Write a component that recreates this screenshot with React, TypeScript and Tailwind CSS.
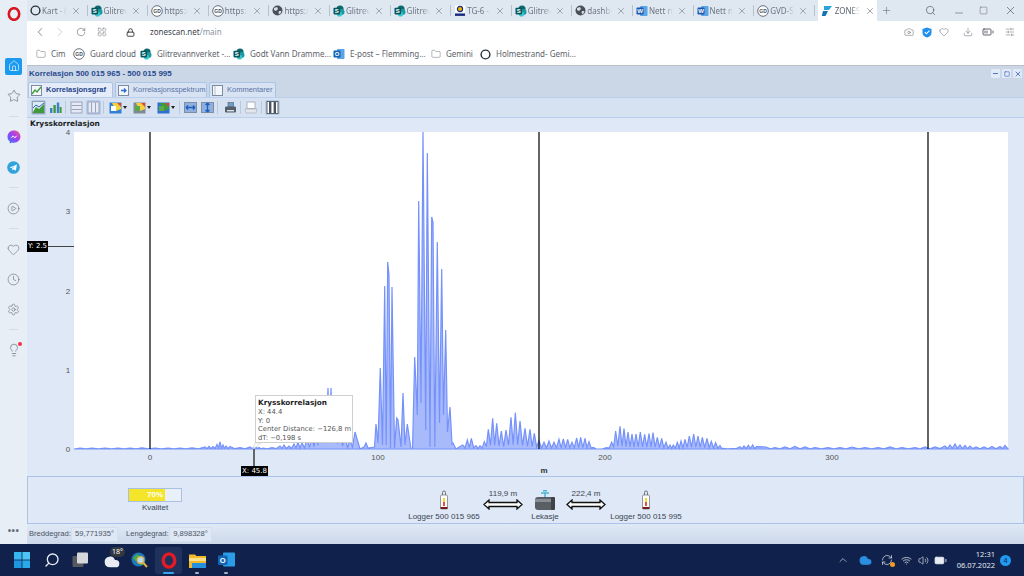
import { FC, ReactNode } from "react";
import {
  Battery,
  BatteryMedium,
  Camera,
  ChevronLeft,
  ChevronRight,
  ChevronUp,
  CirclePlay,
  Clock,
  Cloud,
  Download,
  Folder,
  Heart,
  House,
  LayoutGrid,
  Lightbulb,
  Lock,
  Minus,
  Plus,
  RefreshCw,
  RotateCw,
  Search,
  Settings,
  SlidersHorizontal,
  Square,
  Star,
  Volume2,
  Wifi,
  X,
} from "lucide-react";

const BASE = 449;

// main burst, read off the picture point by point
const burst: number[][] = [
  [360, 449], [364, 447], [366, 443], [368, 448], [374.5, 447], [376, 424], [378, 443], [380.3, 368],
  [382.5, 445], [384.7, 286], [386.2, 445], [387.7, 262], [389, 275], [390.5, 448], [392, 287], [394.5, 448],
  [396.7, 418], [398, 420], [401, 447], [403, 393], [405, 445], [407.3, 424], [411, 449], [412.5, 449],
  [414.7, 357], [417.3, 415], [418.7, 201], [421, 403], [423, 132], [425.7, 430], [427.3, 153], [430, 447],
  [431.7, 217], [433, 222], [434.8, 447], [437.3, 242], [439.5, 423], [441.7, 269], [443.5, 415], [445.7, 330],
  [447.5, 432], [450, 407], [452, 444], [453, 443], [456, 449],
];

const leftPeaks: number[][] = [
  [80, 448], [92, 448], [105, 448], [118, 448], [130, 448], [142, 447.8], [155, 448], [168, 448], [180, 448],
  [192, 447.8], [205, 447], [209, 446.5], [213, 446.5], [217, 444.5], [220, 442], [223, 445], [226, 446],
  [230, 446.5], [240, 447.5], [250, 447], [255, 446], [259, 447.5], [263, 448], [272, 447.5], [280, 446],
  [284, 445], [289, 446], [294, 444], [298, 442], [302, 443], [307, 439], [312, 436], [316, 432], [320, 418],
  [324, 400], [328, 388], [331, 388], [335, 405], [340, 425], [345, 436], [350, 440], [355, 432],
];

const rightPeaks: number[][] = [
  [8, 195], [22, 180], [34, 175], [48, 197], [60, 197], [73, 185], [85, 148], [98, 115], [110, 130], [124, 153],
  [138, 150], [153, 112], [166, 98], [180, 123], [195, 145], [210, 148], [223, 160], [237, 182], [252, 187],
  [267, 183], [282, 187], [297, 178], [310, 177], [323, 178], [336, 187], [350, 174], [362, 172], [375, 175],
  [387, 185], [400, 202], [415, 207], [440, 203], [455, 187], [467, 153], [480, 139], [492, 146], [504, 156],
  [516, 162], [528, 162], [541, 156], [554, 163], [567, 161], [579, 158], [592, 172], [605, 175], [618, 187],
  [630, 195], [640, 195], [652, 187], [663, 183], [675, 178], [688, 168], [701, 162], [714, 168], [727, 172],
  [741, 175], [754, 184], [767, 188], [780, 197], [790, 205], [815, 206], [840, 200], [852, 198], [865, 196],
  [878, 195], [890, 200],
].map(([x, y]) => [460 + x / 3, 380 + y / 3]);

const farPeaks: number[][] = [
  [766, 447], [775, 447.5], [785, 447], [795, 446.5], [805, 447], [815, 447.5], [828, 447.5], [840, 447.5],
  [852, 447], [865, 447.5], [878, 447.5], [890, 447], [902, 447.5], [915, 447.5], [925, 447], [935, 447],
  [945, 446], [950, 445], [955, 444], [960, 445], [965, 445.5], [970, 446], [976, 447], [984, 447], [992, 446.5],
  [1000, 446.5], [1005, 445.5],
];

const withValleys = (peaks: number[][]) => {
  const out: number[][] = [];
  peaks.forEach((p, i) => {
    out.push(p);
    const next = peaks[i + 1];
    if (next) {
      const top = Math.min(p[1], next[1]);
      out.push([(p[0] + next[0]) / 2, BASE - (BASE - top) * 0.12]);
    }
  });
  return out;
};

const series = [
  [74, 449],
  ...withValleys(leftPeaks),
  ...burst,
  ...withValleys(rightPeaks),
  ...withValleys(farPeaks),
  [1008, 449],
];
const line = series.map((p) => p.join(",")).join(" ");

const CrossChart: FC = () => (
  <svg viewBox="27 129 997 347" className="block h-[347px] w-[997px]">
    <rect x="74" y="132" width="934" height="317" fill="#ffffff" />
    <polygon points={line} fill="#a9bafb" stroke="#7592fb" strokeWidth="1.2" />
    {[150, 539, 928].map((x) => (
      <line key={x} x1={x} x2={x} y1="132" y2="449" stroke="#111111" strokeWidth="1.3" />
    ))}
    <line x1="48" x2="74" y1="246.5" y2="246.5" stroke="#444444" />
    <line x1="254" x2="254" y1="449" y2="467" stroke="#111111" strokeWidth="1.2" />
    <g fontSize="8" fill="#555555" fontFamily="'Liberation Sans', sans-serif">
      {[
        ["4", 135],
        ["3", 214],
        ["2", 294],
        ["1", 373],
        ["0", 452],
      ].map(([t, y]) => (
        <text key={t} x="68" y={y} textAnchor="middle">
          {t}
        </text>
      ))}
      {[
        ["0", 150],
        ["100", 378],
        ["200", 605],
        ["300", 832],
      ].map(([t, x]) => (
        <text key={t} x={x} y="460" textAnchor="middle">
          {t}
        </text>
      ))}
    </g>
    <text x="544" y="473" fontSize="8" fontWeight="700" fill="#333333" textAnchor="middle" fontFamily="'Liberation Sans', sans-serif">
      m
    </text>
    <path d="M255 443 L253 449 L261 443 Z" fill="#ffffff" stroke="#cccccc" strokeWidth="0.6" />
  </svg>
);

/* ---------- small browser glyphs ---------- */
const SharePoint: FC<{ size?: number }> = ({ size = 12 }) => (
  <svg width={size} height={size} viewBox="0 0 12 12" className="shrink-0">
    <circle cx="7" cy="4" r="3.6" fill="#0b6a6f" />
    <circle cx="8.5" cy="7" r="3" fill="#1a9ba1" />
    <circle cx="6.5" cy="9" r="2.6" fill="#37c6d0" />
    <rect x="0.5" y="2.8" width="6.6" height="6.6" rx="0.8" fill="#04575c" />
    <text x="3.8" y="8.2" fontSize="6" fontWeight="700" fill="#ffffff" textAnchor="middle" fontFamily="'Liberation Sans', sans-serif">
      S
    </text>
  </svg>
);

const Ring: FC = () => (
  <svg width="11" height="11" viewBox="0 0 11 11" className="shrink-0">
    <circle cx="5.5" cy="5.5" r="4.4" fill="none" stroke="#26323c" strokeWidth="1.4" />
  </svg>
);

const GuardCloud: FC = () => (
  <svg width="12" height="12" viewBox="0 0 12 12" className="shrink-0">
    <circle cx="6" cy="6" r="5.3" fill="#ffffff" stroke="#44505e" strokeWidth="0.8" />
    <text x="6" y="7.8" fontSize="5" fontWeight="700" fill="#44505e" textAnchor="middle" fontFamily="'Liberation Sans', sans-serif">
      GD
    </text>
  </svg>
);

const Globe: FC = () => (
  <svg width="11" height="11" viewBox="0 0 11 11" className="shrink-0">
    <circle cx="5.5" cy="5.5" r="5" fill="#4a5058" />
    <path d="M2 3 L5 2 L6 4 L4 6 L2 5 Z M7 6 L9.5 6 L8 9.5 L6.5 8 Z" fill="#d6dde6" />
  </svg>
);

const OfficeApp: FC<{ letter: string; color: string }> = ({ letter, color }) => (
  <svg width="12" height="12" viewBox="0 0 12 12" className="shrink-0">
    <rect x="4" y="1" width="7.5" height="10" rx="0.8" fill="#5aa5e6" />
    <rect x="0.5" y="2.6" width="7" height="7" rx="0.8" fill={color} />
    <text x="4" y="8" fontSize="6" fontWeight="700" fill="#ffffff" textAnchor="middle" fontFamily="'Liberation Sans', sans-serif">
      {letter}
    </text>
  </svg>
);

const Tg6: FC = () => (
  <svg width="12" height="12" viewBox="0 0 12 12" className="shrink-0">
    <rect x="1" y="0.5" width="10" height="7" fill="#ffffff" />
    <circle cx="6" cy="4" r="2.6" fill="#f0b400" stroke="#1a2c80" strokeWidth="1.2" />
    <rect x="1" y="8.5" width="10" height="2.4" fill="#1a2c80" />
  </svg>
);

const ZoneLogo: FC = () => (
  <svg width="12" height="12" viewBox="0 0 12 12" className="shrink-0">
    <path d="M3 1 L11 1 L8 5 L3 5 Z" fill="#29a3e0" />
    <path d="M2 6 L7 6 L4.5 11 L0.8 11 Z" fill="#1373b8" />
  </svg>
);

const tabs: { icon: ReactNode; label: string }[] = [
  { icon: <Ring />, label: "Kart - (" },
  { icon: <SharePoint />, label: "Glitrev" },
  { icon: <GuardCloud />, label: "https:/" },
  { icon: <GuardCloud />, label: "https:/" },
  { icon: <Globe />, label: "https:/" },
  { icon: <SharePoint />, label: "Glitrev" },
  { icon: <SharePoint />, label: "Glitrev" },
  { icon: <Tg6 />, label: "TG-6 -" },
  { icon: <SharePoint />, label: "Glitrev" },
  { icon: <Globe />, label: "dashbo" },
  { icon: <OfficeApp letter="W" color="#1d56b0" />, label: "Nett ny" },
  { icon: <OfficeApp letter="W" color="#1d56b0" />, label: "Nett ny" },
  { icon: <GuardCloud />, label: "GVD-Sy" },
];

const TabBar: FC = () => (
  <div className="flex h-[21px] items-center bg-[#dfe7f1]">
    {tabs.map((t, i) => (
      <div key={i} className="flex h-full w-[60.6px] shrink-0 items-center gap-[1px] pl-[3px]">
        {t.icon}
        <span className="w-[27px] overflow-hidden whitespace-nowrap text-[8px] text-[#6d7683] [mask-image:linear-gradient(90deg,#000_65%,transparent)]">
          {t.label}
        </span>
        <X size={10} strokeWidth={1.2} className="ml-[3px] shrink-0 text-[#5d6670]" />
        <span className="ml-[5px] h-[11px] w-px shrink-0 bg-[#b7c0cb]" />
      </div>
    ))}
    <div className="ml-[3px] flex h-full w-[59px] shrink-0 items-center gap-[2px] bg-white pl-[3px]">
      <ZoneLogo />
      <span className="w-[25px] overflow-hidden whitespace-nowrap text-[8px] text-[#59626d] [mask-image:linear-gradient(90deg,#000_65%,transparent)]">
        ZONES
      </span>
      <X size={10} strokeWidth={1.2} className="ml-[3px] shrink-0 text-[#444c55]" />
    </div>
    <Plus size={11} strokeWidth={1.2} className="ml-[4px] shrink-0 text-[#5d6670]" />
    <div className="ml-auto flex items-center">
      <Search size={11} strokeWidth={1.4} className="mr-[17px] text-[#4a525c]" />
      <Minus size={12} strokeWidth={1.1} className="mr-[14px] mt-[4px] text-[#4a525c]" />
      <Square size={9} strokeWidth={1.1} className="mr-[16px] text-[#4a525c]" />
      <X size={13} strokeWidth={1.1} className="mr-[7px] text-[#3c444d]" />
    </div>
  </div>
);

const AddressBar: FC = () => (
  <div className="flex h-[22px] items-center bg-white text-[#3d444c]">
    <ChevronLeft size={14} strokeWidth={1.2} className="ml-[6px] text-[#555c65]" />
    <ChevronRight size={14} strokeWidth={1.2} className="ml-[6px] text-[#b4bac2]" />
    <RotateCw size={10} strokeWidth={1.3} className="ml-[9px] text-[#555c65]" />
    <LayoutGrid size={10} strokeWidth={1.1} className="ml-[11px] text-[#6a717a]" />
    <Lock size={9} strokeWidth={2.4} className="ml-[19px] text-[#2f353c]" />
    <span className="ml-[15px] text-[8px]">
      zonescan.net<span className="text-[#8b929b]">/main</span>
    </span>
    <div className="ml-auto flex items-center text-[#5b636c]">
      <Camera size={10} strokeWidth={1.2} />
      <svg width="10" height="11" viewBox="0 0 10 11" className="ml-[8px]">
        <path d="M5 0.5 L9.5 2 V6 C9.5 8.5 7 10 5 10.5 C3 10 0.5 8.5 0.5 6 V2 Z" fill="#1e90f0" />
        <path d="M2.8 5.2 L4.4 6.8 L7.4 3.6" fill="none" stroke="#ffffff" strokeWidth="1.1" />
      </svg>
      <Heart size={10} strokeWidth={1.2} className="ml-[7px]" />
      <Download size={10} strokeWidth={1.2} className="ml-[14px]" />
      <BatteryMedium size={12} strokeWidth={1.6} className="ml-[9px] text-[#3a4048]" />
      <SlidersHorizontal size={10} strokeWidth={1.2} className="ml-[11px] mr-[9px]" />
    </div>
  </div>
);

const bookmarks: { icon: ReactNode; label: string; width: string }[] = [
  { icon: <Folder size={10} strokeWidth={1.1} className="text-[#5b636c]" />, label: "Cim", width: "w-[37px]" },
  { icon: <GuardCloud />, label: "Guard cloud", width: "w-[67px]" },
  { icon: <SharePoint />, label: "Glitrevannverket -...", width: "w-[93px]" },
  { icon: <SharePoint />, label: "Godt Vann Dramme...", width: "w-[100px]" },
  { icon: <OfficeApp letter="O" color="#0f64b4" />, label: "E-post – Flemming...", width: "w-[98px]" },
  { icon: <Folder size={10} strokeWidth={1.1} className="text-[#5b636c]" />, label: "Gemini", width: "w-[49px]" },
  { icon: <Ring />, label: "Holmestrand- Gemi...", width: "w-[90px]" },
];

const BookmarkBar: FC = () => (
  <div className="flex h-[23px] items-center border-b border-[#b9c0c8] bg-white pl-[9px] text-[8px] text-[#5c636b]">
    {bookmarks.map((b) => (
      <div key={b.label} className={`flex shrink-0 items-center gap-[5px] whitespace-nowrap ${b.width}`}>
        {b.icon}
        <span>{b.label}</span>
      </div>
    ))}
  </div>
);

const SideRow: FC<{ children: ReactNode }> = ({ children }) => (
  <div className="flex h-[30px] items-center justify-center text-[#69737e]">{children}</div>
);
const SideSep: FC = () => (
  <div className="flex h-[11px] items-center justify-center">
    <div className="h-px w-[9px] bg-[#d4dbe3]" />
  </div>
);

const Sidebar: FC = () => (
  <aside className="flex w-[27px] shrink-0 flex-col bg-[#e7eef6]">
    <div className="flex h-[51px] shrink-0 justify-center pt-[7px]">
      <svg width="14" height="14" viewBox="0 0 14 14">
        <ellipse cx="7" cy="7" rx="5.2" ry="5.8" fill="none" stroke="#d8161f" strokeWidth="2.6" />
      </svg>
    </div>
    <SideRow>
      <div className="flex h-[17px] w-[17px] items-center justify-center rounded-[2px] bg-[#1a9bf0]">
        <House size={12} strokeWidth={1.3} className="text-white" />
      </div>
    </SideRow>
    <SideRow>
      <Star size={14} strokeWidth={1.2} />
    </SideRow>
    <SideSep />
    <SideRow>
      <svg width="14" height="14" viewBox="0 0 14 14">
        <defs>
          <linearGradient id="msg" x1="0" y1="1" x2="1" y2="0">
            <stop offset="0" stopColor="#2f7bf6" />
            <stop offset="0.55" stopColor="#a33df0" />
            <stop offset="1" stopColor="#f5617a" />
          </linearGradient>
        </defs>
        <path d="M7 0.5 C3.2 0.5 0.5 3.2 0.5 6.7 C0.5 8.7 1.4 10.3 2.8 11.4 V13.5 L4.9 12.4 C5.6 12.6 6.3 12.7 7 12.7 C10.8 12.7 13.5 10 13.5 6.6 C13.5 3.2 10.8 0.5 7 0.5 Z" fill="url(#msg)" />
        <path d="M3.2 8.4 L5.9 5.4 L7.6 6.9 L10.6 5.2 L8 8.2 L6.2 6.8 Z" fill="#ffffff" />
      </svg>
    </SideRow>
    <SideRow>
      <svg width="13" height="13" viewBox="0 0 13 13">
        <circle cx="6.5" cy="6.5" r="6.3" fill="#2ea3dc" />
        <path d="M2.6 6.4 L10 3.4 L8.8 9.8 L6.6 8.2 L5.4 9.4 L5.2 7.6 L8.4 4.8 L4.4 7.2 Z" fill="#ffffff" />
      </svg>
    </SideRow>
    <SideSep />
    <SideRow>
      <CirclePlay size={13} strokeWidth={1.2} />
    </SideRow>
    <SideSep />
    <SideRow>
      <Heart size={13} strokeWidth={1.2} />
    </SideRow>
    <SideRow>
      <Clock size={13} strokeWidth={1.2} />
    </SideRow>
    <SideRow>
      <Settings size={13} strokeWidth={1.2} />
    </SideRow>
    <SideSep />
    <SideRow>
      <div className="relative">
        <Lightbulb size={14} strokeWidth={1.2} />
        <span className="absolute right-[-1px] top-[-1px] h-[4px] w-[4px] rounded-full bg-[#ef3340]" />
      </div>
    </SideRow>
    <div className="mt-auto pb-[9px] text-center text-[9px] font-bold leading-[9px] tracking-[0.5px] text-[#5e6873]">•••</div>
  </aside>
);

/* ---------- application toolbar ---------- */
const ChartGlyph: FC<{ kind: string }> = ({ kind }) => {
  if (kind === "area") {
    return (
      <svg width="13" height="13" viewBox="0 0 13 13">
        <rect x="0.5" y="0.5" width="12" height="12" fill="#dfe9f6" stroke="#8fa2ba" />
        <path d="M1 11 L4 6 L7 8 L12 3 V12 H1 Z" fill="#3f9b3a" />
        <path d="M1 7 L4 4 L7 6 L12 2" fill="none" stroke="#2c62c0" />
      </svg>
    );
  }
  if (kind === "bars") {
    return (
      <svg width="13" height="13" viewBox="0 0 13 13">
        <rect x="1" y="7" width="2.4" height="5" fill="#3d7fc9" />
        <rect x="4.4" y="4" width="2.4" height="8" fill="#3f9b3a" />
        <rect x="7.8" y="1.5" width="2.4" height="10.5" fill="#3d7fc9" />
        <rect x="10.6" y="6" width="2" height="6" fill="#3f9b3a" />
      </svg>
    );
  }
  if (kind === "rows" || kind === "cols") {
    const vertical = kind === "cols";
    return (
      <svg width="13" height="13" viewBox="0 0 13 13">
        <rect x="1" y="1" width="11" height="11" fill="#e6eaf5" stroke="#9aa4bb" />
        {vertical ? (
          <path d="M4.5 1.5 V11.5 M8.5 1.5 V11.5" stroke="#9aa4bb" />
        ) : (
          <path d="M1.5 4.5 H11.5 M1.5 8.5 H11.5" stroke="#9aa4bb" />
        )}
      </svg>
    );
  }
  if (kind === "colorA" || kind === "colorB" || kind === "colorC") {
    const main = kind === "colorA" ? "#2f7fd6" : kind === "colorB" ? "#7f8a99" : "#2f6fd0";
    return (
      <svg width="13" height="13" viewBox="0 0 13 13">
        <rect x="0.5" y="1.5" width="12" height="11" fill={main} />
        <path d="M3 2 H12 V8 L7 10 Z" fill={kind === "colorC" ? "#3f9b3a" : "#f3d23c"} />
        <path d="M8 2 H12 V6 Z" fill="#e2452f" />
        <rect x="2" y="5" width="5" height="5" fill={kind === "colorA" ? "#ffffff" : "#5aa84a"} />
      </svg>
    );
  }
  if (kind === "fitH" || kind === "fitV") {
    return (
      <svg width="13" height="13" viewBox="0 0 13 13">
        <rect x="0.5" y="1.5" width="12" height="10" fill="#8fb0de" stroke="#7b8ea3" />
        <path
          d={kind === "fitH" ? "M2 6.5 H11 M2 6.5 L4 4.5 M2 6.5 L4 8.5 M11 6.5 L9 4.5 M11 6.5 L9 8.5" : "M6.5 2 V11 M6.5 2 L4.5 4 M6.5 2 L8.5 4 M6.5 11 L4.5 9 M6.5 11 L8.5 9"}
          stroke="#1d5fc0"
          strokeWidth="1.4"
          fill="none"
        />
      </svg>
    );
  }
  if (kind === "print") {
    return (
      <svg width="13" height="13" viewBox="0 0 13 13">
        <rect x="4" y="1.5" width="5.5" height="4" fill="#6aa0d0" stroke="#4e5b68" strokeWidth="0.6" />
        <rect x="1" y="5.5" width="11" height="6" rx="1" fill="#55606c" />
        <rect x="3" y="9" width="7" height="1.4" fill="#dfe5ec" />
      </svg>
    );
  }
  if (kind === "export") {
    return (
      <svg width="14" height="13" viewBox="0 0 14 13">
        <rect x="3" y="1" width="8" height="6.5" fill="#ffffff" stroke="#a9b3bf" />
        <path d="M1 8 H13 L12 12 H2 Z" fill="#e3e7ec" stroke="#a9b3bf" strokeWidth="0.7" />
      </svg>
    );
  }
  return (
    <svg width="13" height="13" viewBox="0 0 13 13">
      <rect x="1" y="0.5" width="11" height="12" fill="#ffffff" stroke="#5a626c" />
      <rect x="3" y="1" width="2.4" height="11" fill="#4a5460" />
      <rect x="7.6" y="1" width="2.4" height="11" fill="#4a5460" />
    </svg>
  );
};

const ToolBtn: FC<{ kind: string; active?: boolean; menu?: boolean }> = ({ kind, active, menu }) => (
  <div
    className={`flex h-[15px] shrink-0 items-center justify-center gap-[1px] ${menu ? "w-[22px]" : "w-[15px]"} ${active ? "rounded-[2px] bg-[#b6cbe6]" : ""}`}
  >
    <ChartGlyph kind={kind} />
    {menu && <span className="h-0 w-0 border-x-[2.5px] border-t-[3px] border-x-transparent border-t-[#222]" />}
  </div>
);

const ToolSep: FC = () => <div className="mx-[0.5px] h-[13px] w-px shrink-0 bg-[#b9c9de]" />;

const AppTab: FC<{ kind: string; label: string; active?: boolean; width: string }> = ({ kind, label, active, width }) => (
  <div
    className={`flex h-[15px] shrink-0 items-center gap-[4px] rounded-t-[2px] border border-b-0 border-[#a9c4e6] pl-[2px] text-[7.5px] leading-none ${width} ${
      active ? "bg-[#e3ecf8] font-bold text-[#24428a]" : "bg-[#d7e3f2] text-[#5a72a8]"
    }`}
  >
    <svg width="11" height="11" viewBox="0 0 11 11" className="shrink-0">
      <rect x="0.5" y="0.5" width="10" height="10" fill="#f3f6fa" stroke="#7d8ca0" />
      {kind === "graf" && <path d="M1 9 L4 5 L6 7 L10 2" fill="none" stroke="#3f9b3a" strokeWidth="1.3" />}
      {kind === "spek" && <path d="M3 5.5 H8 M6 3.5 L8 5.5 L6 7.5" fill="none" stroke="#2f6fd0" strokeWidth="1.3" />}
      {kind === "note" && <path d="M3 1 V10" stroke="#b9c2cd" />}
    </svg>
    <span className="whitespace-nowrap">{label}</span>
  </div>
);

const Thermo: FC = () => (
  <svg width="10" height="20" viewBox="0 0 10 20">
    <path d="M3.5 5 V2.5 A1.5 1.5 0 0 1 6.5 2.5 V5" fill="none" stroke="#6b7178" />
    <rect x="1.5" y="5" width="7" height="14" rx="1.2" fill="#fbfbfb" stroke="#7b8087" strokeWidth="0.8" />
    <rect x="4" y="8" width="2" height="4" fill="#f2d93a" />
    <rect x="4" y="12" width="2" height="4" fill="#e0533d" />
    <rect x="1.5" y="17" width="7" height="2" fill="#7a1a1a" />
  </svg>
);

const Arrow: FC = () => (
  <svg width="40" height="11" viewBox="0 0 40 11" className="block">
    <path d="M1 5.5 L6 1 V3.5 H34 V1 L39 5.5 L34 10 V7.5 H6 V10 Z" fill="#ffffff" stroke="#111111" strokeWidth="1.3" />
  </svg>
);

const Distance: FC<{ value: string }> = ({ value }) => (
  <div className="flex w-[40px] shrink-0 flex-col items-center">
    <span className="whitespace-nowrap text-[8px] leading-[11px] text-[#3c4653]">{value}</span>
    <Arrow />
  </div>
);

const Logger: FC<{ label: string }> = ({ label }) => (
  <div className="flex w-[70px] shrink-0 flex-col items-center">
    <Thermo />
    <span className="mt-[2px] whitespace-nowrap text-[8px] leading-[10px] text-[#3c4653]">{label}</span>
  </div>
);

const LoggerPanel: FC = () => (
  <div className="flex h-[48px] items-start border-y border-l border-r border-[#a9c4e8] pl-[100px] pt-[11px]">
    <div className="flex w-[54px] shrink-0 flex-col items-center">
      <div className="relative h-[14px] w-[54px] border border-[#a9c1e0] bg-[#e9f0fa]">
        <div className="h-full w-[70%] bg-[#f5e52a]" />
        <span className="absolute inset-0 text-center text-[8px] font-bold leading-[12px] text-white">70%</span>
      </div>
      <span className="mt-[1px] text-[8px] leading-[10px] text-[#3c4653]">Kvalitet</span>
    </div>
    <div className="ml-[227px] flex items-end">
      <Logger label="Logger 500 015 965" />
      <div className="mb-[12px] ml-[4px]">
        <Distance value="119,9 m" />
      </div>
      <div className="ml-[2px] flex w-[40px] shrink-0 flex-col items-center">
        <svg width="22" height="21" viewBox="0 0 22 21">
          <path d="M7 3 H15 M11 3 V7 M9 0.8 H13" stroke="#4cb5d6" strokeWidth="1.6" fill="none" />
          <rect x="1" y="7" width="20" height="13" rx="3" fill="#5a5f65" />
          <rect x="1" y="9" width="20" height="3" fill="#878d94" />
          <rect x="17" y="7" width="4" height="13" rx="1" fill="#3f4349" />
        </svg>
        <span className="mt-[1px] whitespace-nowrap text-[8px] leading-[10px] text-[#3c4653]">Lekasje</span>
      </div>
      <div className="mb-[12px] ml-[1px]">
        <Distance value="222,4 m" />
      </div>
      <div className="ml-[5px]">
        <Logger label="Logger 500 015 995" />
      </div>
    </div>
  </div>
);

const Coord: FC<{ label: string; value: string; labelW: string; boxW: string }> = ({ label, value, labelW, boxW }) => (
  <>
    <span className={`shrink-0 whitespace-nowrap ${labelW}`}>{label}</span>
    <span className={`flex h-[15px] shrink-0 items-center justify-center whitespace-nowrap border border-[#d3deee] bg-[#dfe8f5] ${boxW}`}>
      {value}
    </span>
  </>
);

const AppPanel: FC = () => (
  <section className="flex min-h-0 flex-1 flex-col overflow-hidden bg-[#dee8f6] font-['Liberation_Sans',sans-serif]">
    <div className="flex h-[15px] shrink-0 items-center bg-[#cbd7e6] pl-[2px] text-[8px] font-bold text-[#2a4a8f]">
      <span>Korrelasjon 500 015 965 - 500 015 995</span>
      <div className="ml-auto mr-[2px] flex gap-[2px]">
        {["min", "max", "close"].map((b) => (
          <span key={b} className="flex h-[9px] w-[9px] items-center justify-center rounded-[1px] bg-[#e1eaf7] text-[#3f60c0]">
            {b === "min" && <Minus size={7} strokeWidth={3} />}
            {b === "max" && <Square size={6} strokeWidth={2.4} />}
            {b === "close" && <X size={8} strokeWidth={2.4} />}
          </span>
        ))}
      </div>
    </div>
    <div className="flex h-[16px] shrink-0 items-end gap-[2px] bg-[#cbd7e6] pl-[1px]">
      <AppTab kind="graf" label="Korrelasjonsgraf" width="w-[85px]" active />
      <AppTab kind="spek" label="Korrelasjonsspektrum" width="w-[92px]" />
      <AppTab kind="note" label="Kommentarer" width="w-[67px]" />
    </div>
    <div className="flex h-[21px] shrink-0 items-center gap-[2px] border-y border-[#b9cfec] bg-[#d6e2f2] pl-[3.5px]">
      <ToolBtn kind="area" active />
      <ToolBtn kind="bars" />
      <ToolSep />
      <ToolBtn kind="rows" />
      <ToolBtn kind="cols" active />
      <ToolSep />
      <ToolBtn kind="colorA" menu />
      <ToolBtn kind="colorB" menu />
      <ToolBtn kind="colorC" menu />
      <ToolSep />
      <ToolBtn kind="fitH" />
      <ToolBtn kind="fitV" />
      <ToolSep />
      <div className="ml-[2px]">
        <ToolBtn kind="print" />
      </div>
      <ToolSep />
      <ToolBtn kind="export" />
      <ToolSep />
      <ToolBtn kind="split" active />
    </div>
    <div className="relative h-[358px] shrink-0">
      <div className="h-[11px] pl-[3px] font-['DejaVu_Sans',sans-serif] text-[7.4px] font-bold leading-[11px] text-[#1c1c1c]">Krysskorrelasjon</div>
      <CrossChart />
      <div className="absolute left-0 top-[123px] bg-black px-[1px] font-['DejaVu_Sans',sans-serif] text-[7px] leading-[11px] text-white">Y: 2.5</div>
      <div className="absolute left-[214px] top-[348px] bg-black px-[1px] font-['DejaVu_Sans',sans-serif] text-[7px] leading-[10px] text-white">X: 45.8</div>
      <div className="absolute left-[228px] top-[277px] h-[48px] w-[98px] border border-[#cfcfcf] bg-white pl-[2px] pt-[2px] font-['DejaVu_Sans',sans-serif] text-[6.8px] leading-[8.7px] text-[#555]">
        <div className="text-[7.3px] font-bold leading-[10px] text-[#222]">Krysskorrelasjon</div>
        <div>X: 44.4</div>
        <div>Y: 0</div>
        <div className="whitespace-nowrap">Center Distance: −126,8 m</div>
        <div>dT: −0,198 s</div>
      </div>
    </div>
    <LoggerPanel />
    <div className="flex h-[20px] shrink-0 items-center bg-gradient-to-b from-[#e0e9f6] to-[#ccd9ea] pl-[2px] text-[7.6px] text-[#4a5563]">
      <Coord label="Breddegrad:" value="59,771935°" labelW="w-[42px]" boxW="w-[47px]" />
      <span className="w-[8px]" />
      <Coord label="Lengdegrad:" value="9,898328°" labelW="w-[43px]" boxW="w-[43px]" />
    </div>
  </section>
);

const Taskbar: FC = () => (
  <footer className="flex h-[32px] shrink-0 items-center bg-[#10224b] text-white">
    <svg width="16" height="16" viewBox="0 0 16 16" className="ml-[14px] shrink-0">
      <rect x="0" y="0" width="7.6" height="7.6" fill="#35b6ee" />
      <rect x="8.4" y="0" width="7.6" height="7.6" fill="#4cc4f4" />
      <rect x="0" y="8.4" width="7.6" height="7.6" fill="#1f96e0" />
      <rect x="8.4" y="8.4" width="7.6" height="7.6" fill="#2aa9ea" />
    </svg>
    <Search size={16} strokeWidth={2} className="ml-[14px] shrink-0 -scale-x-100 text-[#e8eef6]" />
    <svg width="17" height="16" viewBox="0 0 17 16" className="ml-[12px] shrink-0">
      <rect x="0.5" y="4" width="11" height="11" rx="1" fill="#55585e" />
      <rect x="5" y="0.5" width="11" height="11" rx="1" fill="#d5d7db" />
    </svg>
    <div className="relative ml-[15px] flex w-[20px] shrink-0 justify-start">
      <Cloud size={16} className="mt-[4px] fill-[#e9edf3] text-[#e9edf3]" />
      <span className="absolute left-[6px] top-[-3px] rounded-full bg-[#33383f] px-[2px] text-[7px] leading-[10px] text-white">18°</span>
    </div>
    <svg width="17" height="17" viewBox="0 0 17 17" className="ml-[7px] shrink-0">
      <circle cx="7.5" cy="7.5" r="7" fill="#1f78b8" />
      <path d="M2 6 L6 2 L9 4 L7 8 L4 9 Z M9 10 L13 8 L12 13 L9 13 Z" fill="#49a84c" />
      <circle cx="9.5" cy="8" r="3.4" fill="#b6dcf5" stroke="#e0b040" strokeWidth="1.2" />
      <path d="M12 10.5 L16 15" stroke="#e0b040" strokeWidth="2" />
    </svg>
    <div className="relative ml-[7px] flex h-[27px] w-[27px] shrink-0 items-center justify-center rounded-[3px] bg-[#1f325c]">
      <svg width="16" height="17" viewBox="0 0 16 17">
        <ellipse cx="8" cy="8.5" rx="5.8" ry="6.6" fill="none" stroke="#e41a24" strokeWidth="3.4" />
      </svg>
      <span className="absolute bottom-0 left-[8px] h-[2px] w-[11px] rounded-full bg-[#36a3ef]" />
    </div>
    <div className="relative ml-[7px] flex h-[27px] w-[17px] shrink-0 items-center">
      <svg width="17" height="15" viewBox="0 0 17 15">
        <path d="M0 1.5 H6 L7.5 3 H17 V15 H0 Z" fill="#f2b92c" />
        <rect x="0" y="5" width="17" height="3" fill="#fbe08a" />
        <rect x="3" y="10" width="14" height="5" fill="#2391e0" />
      </svg>
      <span className="absolute bottom-0 left-[6px] h-[2px] w-[4px] rounded-full bg-[#a9b3c2]" />
    </div>
    <div className="relative ml-[12px] flex h-[27px] w-[17px] shrink-0 items-center">
      <svg width="17" height="16" viewBox="0 0 17 16">
        <rect x="5" y="0.5" width="12" height="14" rx="1" fill="#2b9ce8" />
        <rect x="0" y="3.5" width="9.5" height="9.5" rx="1" fill="#0f64b4" />
        <text x="4.7" y="11" fontSize="7.5" fontWeight="700" fill="#ffffff" textAnchor="middle" fontFamily="'Liberation Sans', sans-serif">
          O
        </text>
      </svg>
      <span className="absolute bottom-0 left-[6px] h-[2px] w-[4px] rounded-full bg-[#a9b3c2]" />
    </div>
    <div className="ml-auto flex items-center">
      <ChevronUp size={12} strokeWidth={1.4} className="text-[#d5dce6]" />
      <Cloud size={13} className="ml-[10px] fill-[#2a8fe0] text-[#2a8fe0]" />
      <div className="relative ml-[9px]">
        <RefreshCw size={12} strokeWidth={1.4} className="text-[#dfe5ee]" />
        <span className="absolute bottom-[-1px] right-[-2px] h-[5px] w-[5px] rounded-full bg-[#f59a1e]" />
      </div>
      <Wifi size={11} strokeWidth={1.6} className="ml-[8px] text-[#e8edf4]" />
      <Volume2 size={11} strokeWidth={1.4} className="ml-[6px] text-[#e8edf4]" />
      <Battery size={13} strokeWidth={1.6} className="ml-[5px] fill-[#e8edf4] text-[#e8edf4]" />
      <div className="ml-[4px] w-[44px] text-right text-[7.5px] leading-[11px] text-[#e4e9f1]">
        <div>12:31</div>
        <div className="whitespace-nowrap">06.07.2022</div>
      </div>
      <span className="ml-[5px] mr-[13px] flex h-[11px] w-[11px] items-center justify-center rounded-full bg-[#1f9af0] text-[7px] leading-none text-[#0f2350]">4</span>
    </div>
  </footer>
);

const App: FC = () => (
  <div className="flex h-[576px] w-[1024px] flex-col overflow-hidden font-['Noto_Sans',sans-serif]">
    <div className="flex min-h-0 flex-1">
      <Sidebar />
      <main className="flex min-w-0 flex-1 flex-col">
        <TabBar />
        <AddressBar />
        <BookmarkBar />
        <AppPanel />
      </main>
    </div>
    <Taskbar />
  </div>
);

export default App;
